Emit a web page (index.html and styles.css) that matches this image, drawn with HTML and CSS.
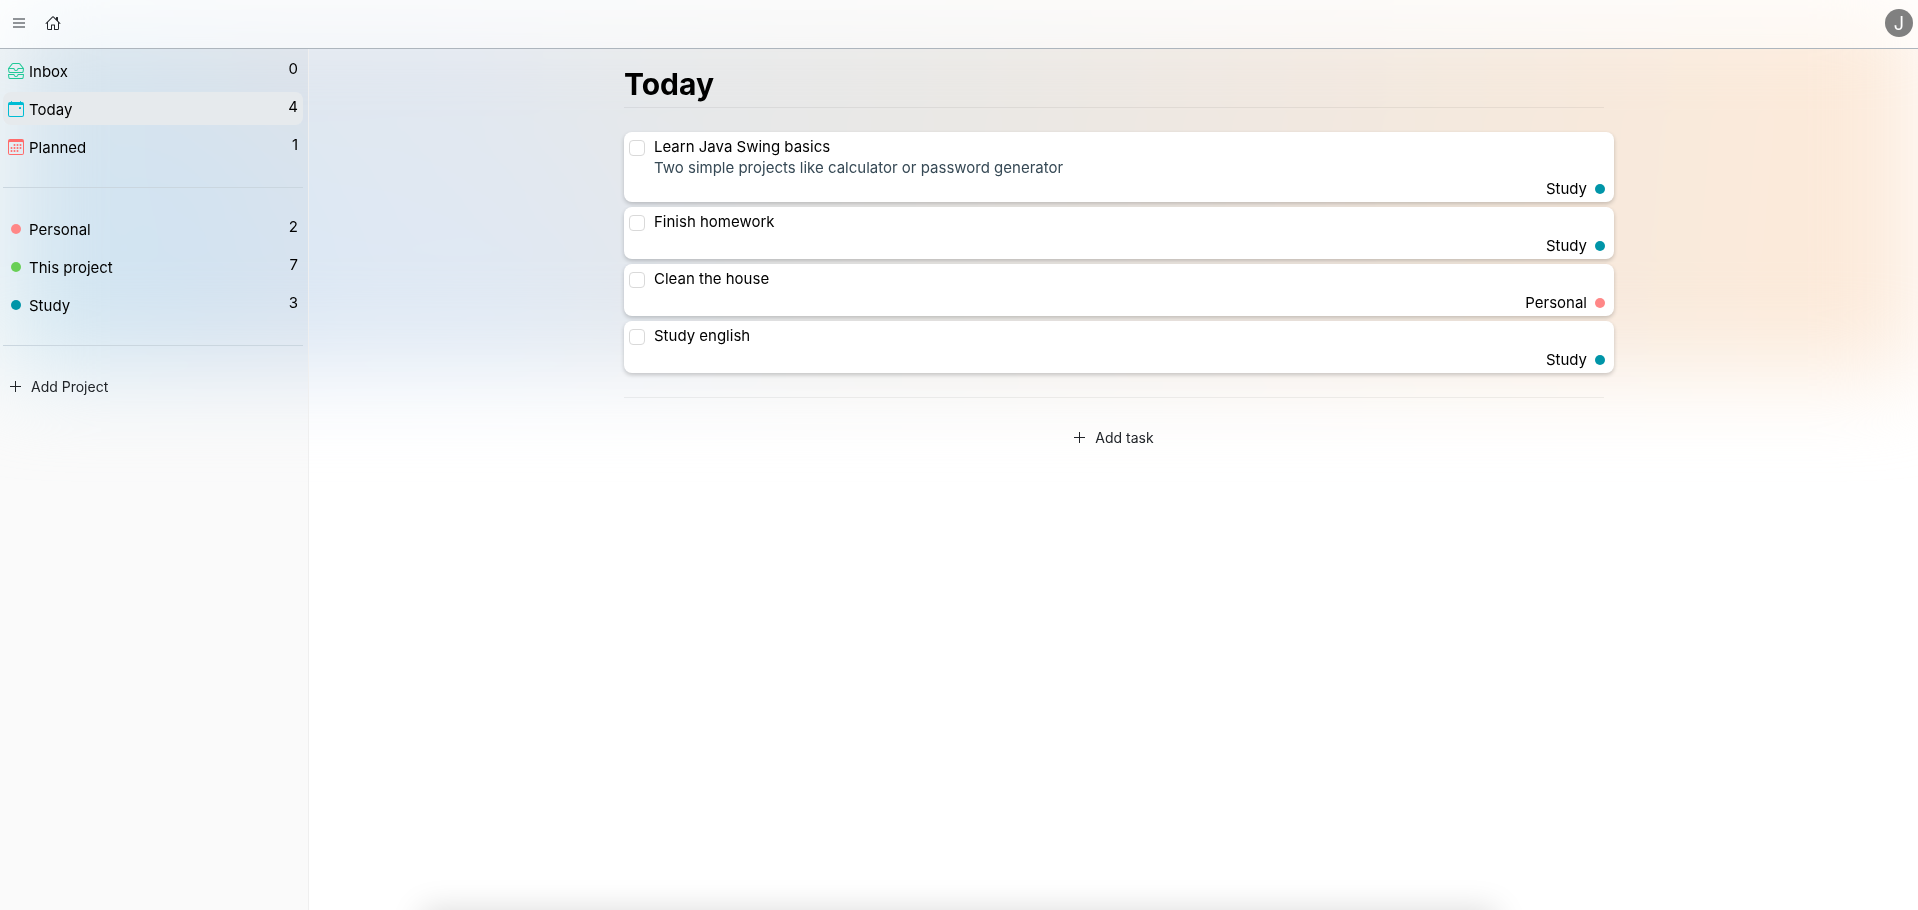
FILE: index.html
```html
<!DOCTYPE html>
<html lang="en">
<head>
<meta charset="utf-8">
<title>Today</title>
<link rel="stylesheet" href="styles.css">
</head>
<body>
<div class="backdrop" aria-hidden="true"><div class="glow"></div></div>
<header class="topbar">
  <button class="icon-btn menu-btn" aria-label="Toggle menu">
    <svg width="12" height="10" viewBox="0 0 12 10"><path d="M0 1h12M0 5h12M0 9h12" stroke="currentColor" stroke-width="2"/></svg>
  </button>
  <a class="icon-btn home" href="#" aria-label="Home">
    <svg width="16" height="16" viewBox="0 0 16 16" fill="currentColor"><path fill-rule="evenodd" d="M8.707 1.500a1 1 0 0 0-1.414 0L.646 8.146a.5.5 0 0 0 .708.708L2 8.207V13.500A1.500 1.500 0 0 0 3.500 15h3a.5.5 0 0 0 .5-.5V10.500h2v4a.5.5 0 0 0 .5.5h3a1.500 1.500 0 0 0 1.500-1.500V8.207l.646.647a.5.5 0 0 0 .708-.708L13 5.793V2.500a.5.5 0 0 0-.5-.5h-1a.5.5 0 0 0-.5.5v1.293L8.707 1.500zM13 7.207V14h-3v-4a.5.5 0 0 0-.5-.5h-3a.5.5 0 0 0-.5.5v4H3V7.207l5-5 5 5z"/></svg>
  </a>
  <button class="avatar" aria-label="Account">J</button>
</header>
<div class="layout">
  <nav class="sidebar" aria-label="Projects">
    <ul class="nav-list">
      <li><a class="nav-item" href="#"><span class="mark inbox"><svg width="16" height="16" viewBox="0 0 16 16" fill="currentColor"><path d="M4.980 1a.5.5 0 0 0-.390.188L1.540 5H6a.5.5 0 0 1 .5.5 1.500 1.500 0 0 0 3 0A.5.5 0 0 1 10 5h4.460l-3.050-3.812A.5.5 0 0 0 11.020 1H4.980zm9.954 5H10.450a2.500 2.500 0 0 1-4.900 0H1.066l.32 2.562A.5.5 0 0 0 1.884 9h12.234a.5.5 0 0 0 .496-.438L14.933 6zM3.809.563A1.500 1.500 0 0 1 4.981 0h6.038a1.500 1.500 0 0 1 1.172.563l3.700 4.625a.5.5 0 0 1 .105.374l-.390 3.124A1.500 1.500 0 0 1 14.117 10H1.883A1.500 1.500 0 0 1 .394 8.686l-.390-3.124a.5.5 0 0 1 .106-.374L3.810.563zM.125 11.170A.5.5 0 0 1 .5 11H6a.5.5 0 0 1 .5.5 1.500 1.500 0 0 0 3 0 .5.5 0 0 1 .5-.5h5.500a.5.5 0 0 1 .496.562l-.390 3.124A1.500 1.500 0 0 1 14.117 16H1.883a1.500 1.500 0 0 1-1.489-1.314l-.390-3.124a.5.5 0 0 1 .121-.393zm.941.830.32 2.562a.5.5 0 0 0 .497.438h12.234a.5.5 0 0 0 .496-.438l.32-2.562H10.450a2.500 2.500 0 0 1-4.900 0H1.066z"/></svg></span><span class="label">Inbox</span><span class="count">0</span></a></li>
      <li><a class="nav-item active" href="#" aria-current="page"><span class="mark today"><svg width="16" height="16" viewBox="0 0 16 16" fill="currentColor"><path d="M11 6.500a.5.5 0 0 1 .5-.5h1a.5.5 0 0 1 .5.5v1a.5.5 0 0 1-.5.5h-1a.5.5 0 0 1-.5-.5v-1z"/><path fill-rule="evenodd" d="M3.500 0a.5.5 0 0 1 .5.5V1h8V.5a.5.5 0 0 1 1 0V1h1a2 2 0 0 1 2 2v11a2 2 0 0 1-2 2H2a2 2 0 0 1-2-2V3a2 2 0 0 1 2-2h1V.5a.5.5 0 0 1 .5-.5zM1 4v10a1 1 0 0 0 1 1h12a1 1 0 0 0 1-1V4H1z"/></svg></span><span class="label">Today</span><span class="count">4</span></a></li>
      <li><a class="nav-item" href="#"><span class="mark planned"><svg width="16" height="16" viewBox="0 0 16 16" fill="currentColor"><path fill-rule="evenodd" d="M14 0H2a2 2 0 0 0-2 2v12a2 2 0 0 0 2 2h12a2 2 0 0 0 2-2V2a2 2 0 0 0-2-2zM1 3.857C1 3.384 1.448 3 2 3h12c.552 0 1 .384 1 .857v10.286c0 .473-.448.857-1 .857H2c-.552 0-1-.384-1-.857V3.857z"/><g><circle cx="6.500" cy="6" r="1"/><circle cx="9.500" cy="6" r="1"/><circle cx="12.500" cy="6" r="1"/><circle cx="3.500" cy="9" r="1"/><circle cx="6.500" cy="9" r="1"/><circle cx="9.500" cy="9" r="1"/><circle cx="12.500" cy="9" r="1"/><circle cx="3.500" cy="12" r="1"/><circle cx="6.500" cy="12" r="1"/><circle cx="9.500" cy="12" r="1"/></g></svg></span><span class="label">Planned</span><span class="count">1</span></a></li>
    </ul>
    <hr class="rule">
    <ul class="nav-list">
      <li><a class="nav-item" href="#"><span class="mark"><span class="dot coral"></span></span><span class="label">Personal</span><span class="count">2</span></a></li>
      <li><a class="nav-item" href="#"><span class="mark"><span class="dot green"></span></span><span class="label">This project</span><span class="count">7</span></a></li>
      <li><a class="nav-item" href="#"><span class="mark"><span class="dot teal"></span></span><span class="label">Study</span><span class="count">3</span></a></li>
    </ul>
    <hr class="rule">
    <button class="add-btn"><svg width="11" height="11" viewBox="0 0 11 11"><path d="M5.500 0v11M0 5.500h11" stroke="currentColor"/></svg>Add Project</button>
  </nav>
  <main class="content">
    <h1 class="title">Today</h1>
    <ul class="tasks">
      <li class="task"><input type="checkbox" id="t1" class="check"><div class="body"><label for="t1" class="name">Learn Java Swing basics</label><p class="desc">Two simple projects like calculator or password generator</p><div class="project">Study<span class="dot teal"></span></div></div></li>
      <li class="task"><input type="checkbox" id="t2" class="check"><div class="body"><label for="t2" class="name">Finish homework</label><div class="project">Study<span class="dot teal"></span></div></div></li>
      <li class="task"><input type="checkbox" id="t3" class="check"><div class="body"><label for="t3" class="name">Clean the house</label><div class="project">Personal<span class="dot coral"></span></div></div></li>
      <li class="task"><input type="checkbox" id="t4" class="check"><div class="body"><label for="t4" class="name">Study english</label><div class="project">Study<span class="dot teal"></span></div></div></li>
    </ul>
    <div class="footer"><button class="add-btn"><svg width="11" height="11" viewBox="0 0 11 11"><path d="M5.500 0v11M0 5.500h11" stroke="currentColor"/></svg>Add task</button></div>
  </main>
</div>
<div class="bottom-shade" aria-hidden="true"></div>
</body>
</html>
```
FILE: styles.css
```css
* { box-sizing: border-box; }

body {
  margin: 0;
  min-height: 100vh;
  display: flex;
  flex-direction: column;
  background: #fff;
  color: #000;
  font: 15px/21px Inter, "Liberation Sans", sans-serif;
}

ul { list-style: none; margin: 0; padding: 0; }
a { color: inherit; text-decoration: none; }
button { font: inherit; color: inherit; background: none; border: 0; padding: 0; cursor: pointer; }

.backdrop {
  position: fixed;
  inset: 0;
  overflow: hidden;
  z-index: -1;
}

.glow {
  height: 372px;
  background:
    radial-gradient(ellipse 12% 60% at 8% 66%, rgba(212, 232, 248, 0.9), transparent),
    radial-gradient(ellipse 8% 60% at 1% 90%, #def3f8, transparent),
    radial-gradient(ellipse 20% 70% at 22% 85%, #dfe9f5, transparent),
    linear-gradient(95deg, #e0edf4 0%, #dde9f2 6%, #e1e7ee 14%, #e1e7f0 22%, #e6e8ea 34%, #eae8e5 50%, #f0e8e1 65%, #f5e9dd 78%, #fceada 94%, #fceada 100%);
  filter: blur(46px);
}

.topbar {
  display: flex;
  align-items: center;
  height: 49px;
  padding: 0 5px 2px 13px;
  border-bottom: 1px solid #adb5bd;
  background: rgba(255, 255, 255, 0.6);
}

.icon-btn { display: flex; }
.menu-btn { color: #909498; }
.home { margin-left: 20px; color: #212529; }

.avatar {
  margin-left: auto;
  width: 28px;
  height: 28px;
  border-radius: 50%;
  background: #808080;
  color: #fff;
  font-size: 18px;
}

.layout { display: flex; flex: 1; }

.sidebar {
  width: 309px;
  flex: none;
  padding: 5px 5px 0 3px;
  border-right: 1px solid #efefef;
  background: rgba(0, 0, 0, 0.02);
}

.nav-list { display: grid; gap: 5px; }

.nav-item {
  display: flex;
  align-items: center;
  height: 33px;
  padding: 1px 5px 0;
  border-radius: 8px;
}

.nav-item.active { background: #e6eaed; }

.mark { display: flex; justify-content: center; width: 16px; }
.inbox { color: #20c997; }
.today { color: #00bcd4; }
.planned { color: #ff6b6b; }
.label { margin-left: 5px; }
.count { margin-left: auto; padding-bottom: 6px; }

.dot { width: 10px; height: 10px; border-radius: 50%; }
.coral { background: #ff8787; }
.green { background: #69cf56; }
.teal { background: #0095a8; }

.rule { margin: 24px 0; border: 0; border-top: 1px solid #cad6df; }

.add-btn {
  display: inline-flex;
  align-items: center;
  gap: 10px;
  padding: 6px 7px;
  font-size: 14px;
  color: #212529;
}

.content {
  flex: 1;
  padding: 16px 304px 0 315px;
}

.title {
  margin: 0 10px 24px 0;
  padding-bottom: 4px;
  border-bottom: 1px solid rgba(0, 0, 0, 0.06);
  font-size: 30px;
  line-height: 38px;
}

.tasks { display: grid; gap: 5px; }

.task {
  display: flex;
  gap: 9px;
  min-height: 52px;
  padding: 4px 9px 3px 5px;
  border-radius: 8px;
  background: #fff;
  box-shadow: 0 2px 4px rgba(0, 0, 0, 0.2);
}

.check {
  appearance: none;
  flex: none;
  width: 16px;
  height: 16px;
  margin: 4px 0 0;
  border: 1px solid #d9d9d9;
  border-radius: 4px;
  background: #fff;
}

.body { display: flex; flex: 1; flex-direction: column; }
.name, .desc { margin: 0; }
.desc { color: #364955; }

.project {
  display: flex;
  justify-content: flex-end;
  align-items: center;
  gap: 8px;
  margin-top: auto;
}

.footer {
  display: flex;
  justify-content: center;
  margin: 24px 10px 0 0;
  padding-top: 23px;
  border-top: 1px solid rgba(0, 0, 0, 0.06);
}

.bottom-shade {
  position: fixed;
  top: 100%;
  left: 22%;
  right: 22%;
  height: 40px;
  box-shadow: 0 0 32px rgba(0, 0, 0, 0.15);
}
```
